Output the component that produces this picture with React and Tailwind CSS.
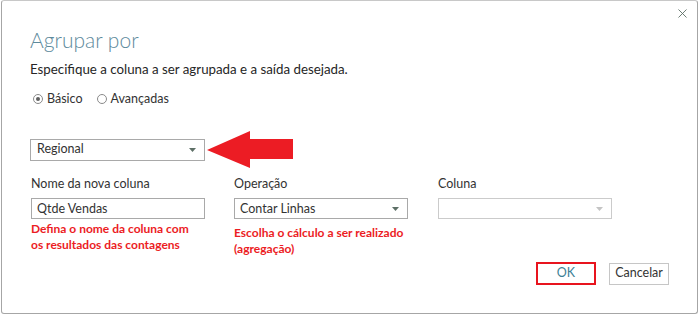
import { X } from 'lucide-react';

const font = { fontFamily: 'Lato, "Noto Sans", sans-serif' };

function Caret({ muted }) {
  return (
    <svg width="7" height="4" viewBox="0 0 7 4" className="shrink-0">
      <path d="M0 0 H7 L3.5 4 Z" fill={muted ? '#c4c4c4' : '#5d6f66'} />
    </svg>
  );
}

function Radio({ checked, label }) {
  return (
    <label className="flex items-center gap-[4px]">
      <span className="flex h-[10px] w-[10px] items-center justify-center rounded-full border border-[#8a8a8a] bg-white">
        {checked ? <span className="h-[4px] w-[4px] rounded-full bg-[#5f5f5f]" /> : null}
      </span>
      <span>{label}</span>
    </label>
  );
}

function RedArrow() {
  return (
    <svg width="87" height="37" viewBox="0 0 87 37" className="ml-[2px] shrink-0">
      <path d="M0 19 L43 0 L43 8 L86 8 L86 28 L43 28 L43 37 Z" fill="#ec1c24" />
    </svg>
  );
}

export default function App() {
  return (
    <div className="h-[315px] w-[700px] bg-white" style={font}>
      <div className="relative ml-[1px] h-[314px] w-[697px] rounded-[3px] border border-t-[#c8c8c8] border-[#a6a6a6] bg-white pl-[28px] text-[#333]">
        <button type="button" className="absolute right-[7px] top-[5px] text-[#596b62]">
          <X size={15} strokeWidth={1.4} />
        </button>

        <h1 className="mt-[26px] text-[21px] font-light leading-[26px] text-[#5d8a9c]">Agrupar por</h1>
        <p className="mt-[7px] text-[13.3px] leading-[18px] text-[#262626]">
          Especifique a coluna a ser agrupada e a saída desejada.
        </p>

        <div className="mt-[13px] flex items-center gap-[14px] text-[12.5px] leading-[16px] text-[#333]">
          <div className="ml-[3px]">
            <Radio checked label="Básico" />
          </div>
          <Radio label="Avançadas" />
        </div>

        <div className="mt-[24px] flex items-center">
          <div className="flex h-[22px] w-[175px] items-center justify-between border border-[#a9a9a9] pl-[6px] pr-[8px] text-[12.5px]">
            <span>Regional</span>
            <Caret />
          </div>
          <RedArrow />
        </div>

        <div className="mt-[8px] flex text-[12.5px] leading-[16px]">
          <div className="ml-[1px] w-[174px]">
            <div className="text-[#333]">Nome da nova coluna</div>
            <div className="mt-[6px] flex h-[21px] items-center border border-[#a9a9a9] pl-[5px]">Qtde Vendas</div>
            <p className="mt-[2px] text-[12px] font-bold leading-[16px] text-[#ec1c24]">
              Defina o nome da coluna com
              <br />
              os resultados das contagens
            </p>
          </div>
          <div className="ml-[29px] w-[174px]">
            <div className="text-[#333]">Operação</div>
            <div className="mt-[6px] flex h-[21px] items-center justify-between border border-[#a9a9a9] pl-[5px] pr-[8px]">
              <span>Contar Linhas</span>
              <Caret />
            </div>
            <p className="mt-[6px] whitespace-nowrap text-[12px] font-bold leading-[16px] text-[#ec1c24]">
              Escolha o cálculo a ser realizado
              <br />
              (agregação)
            </p>
          </div>
          <div className="ml-[30px] w-[174px]">
            <div className="text-[#333]">Coluna</div>
            <div className="mt-[6px] flex h-[21px] items-center justify-end border border-[#cbcbcb] pr-[8px]">
              <Caret muted />
            </div>
          </div>
        </div>

        <div className="absolute bottom-[28px] right-[28px] flex items-center gap-[13px] text-[12.5px]">
          <button type="button" className="h-[23px] w-[60px] border-2 border-[#e8141e] text-[#3c7f95]">
            OK
          </button>
          <button type="button" className="h-[22px] w-[60px] border border-[#c6c6c6] text-[#333]">
            Cancelar
          </button>
        </div>
      </div>
    </div>
  );
}
